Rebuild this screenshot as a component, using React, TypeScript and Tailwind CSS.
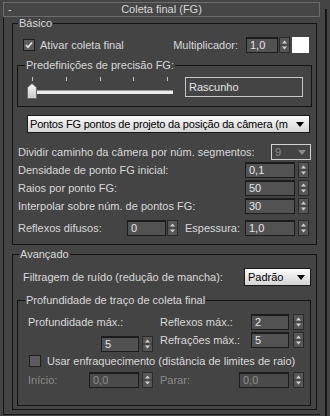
import React from "react";

// setas do spinner (cima / baixo)
const Arrows = ({ className = "" }: { className?: string }) => (
  <svg width="11" height="16" viewBox="0 0 11 16" className={`shrink-0 ${className}`}>
    <rect x="0.5" y="0.5" width="10" height="15" fill="#565656" stroke="#2a2a2a" />
    <line x1="1" y1="8" x2="10" y2="8" stroke="#3a3a3a" />
    <path d="M3 6.5 L5.5 3.5 L8 6.5 Z" fill="#cfcfcf" />
    <path d="M3 9.5 L5.5 12.5 L8 9.5 Z" fill="#cfcfcf" />
  </svg>
);

const Tri = ({ color = "#000", className = "" }: { color?: string; className?: string }) => (
  <svg width="8" height="5" viewBox="0 0 8 5" className={`shrink-0 ${className}`}>
    <path d="M0 0 H8 L4 5 Z" fill={color} />
  </svg>
);

const Field = ({
  value,
  w,
  dim = false,
  className = "",
}: {
  value: string;
  w: string;
  dim?: boolean;
  className?: string;
}) => (
  <div
    className={`h-4 shrink-0 border border-t-2 border-[#1c1c1c] pl-[3px] leading-[13px] ${w} ${
      dim ? "bg-[#4a4a4a] text-[#8e8e8e]" : "bg-[#525252] text-[#e6e6e6]"
    } ${className}`}
  >
    {value}
  </div>
);

const Check = ({ checked = false, className = "" }: { checked?: boolean; className?: string }) => (
  <div
    className={`flex h-3 w-3 shrink-0 items-center justify-center border border-[#1e1e1e] bg-[#5c5c5c] ${className}`}
  >
    {checked && (
      <svg width="8" height="8" viewBox="0 0 8 8">
        <path d="M1 4 L3 6.2 L7 1.5" stroke="#e8e8e8" strokeWidth="1.7" fill="none" />
      </svg>
    )}
  </div>
);

export default function App() {
  return (
    <div className="flex h-[416px] w-[330px] overflow-hidden bg-[#444444] font-['Liberation_Sans',Arial,sans-serif] text-[11px] leading-[13px] text-[#d9d9d9]">
      <div className="ml-[3px] mt-[2px] flex w-[317px] shrink-0 flex-col">
        {/* --- TÍTULO --- */}
        <div className="grid h-[15px] shrink-0 grid-cols-[20px_1fr_20px] items-center border border-[#6c6c6c] bg-[#464646]">
          <span className="pl-[4px]">-</span>
          <span className="text-center">Coleta final (FG)</span>
          <span />
        </div>

        {/* --- CORPO --- */}
        <div className="h-[398px] shrink-0 border-b border-l border-[#161616] pl-[8px]">
          {/* Básico */}
          <fieldset className="w-[305px] border border-[#141414] pb-[7px]">
            <legend className="ml-[5px] px-[1px] leading-[13px]">Básico</legend>

            <div className="mt-[7px] flex h-4 items-center pr-[7px]">
              <Check checked className="ml-[10px]" />
              <span className="ml-[5px]">Ativar coleta final</span>
              <span className="ml-auto">Multiplicador:</span>
              <Field value="1,0" w="w-[32px]" className="ml-[8px]" />
              <Arrows className="ml-px" />
              <div className="ml-[2px] h-4 w-[17px] bg-white" />
            </div>

            <fieldset className="ml-[4px] mt-[6px] h-[48px] w-[295px] border border-[#141414]">
              <legend className="ml-[7px] px-[1px] leading-[13px]">Predefinições de precisão FG:</legend>
              <div className="flex items-start">
                <div className="relative ml-[9px] mt-[5px] h-[22px] w-[146px]">
                  <div className="flex h-[4px] justify-between px-[5px]">
                    <div className="h-[4px] w-px bg-[#c4c4c4]" />
                    <div className="h-[4px] w-px bg-[#c4c4c4]" />
                    <div className="h-[4px] w-px bg-[#c4c4c4]" />
                    <div className="h-[4px] w-px bg-[#c4c4c4]" />
                    <div className="h-[4px] w-px bg-[#c4c4c4]" />
                  </div>
                  <div className="mt-[9px] h-[4px] w-full border-t border-[#9a9a9a] bg-[#ececec]" />
                  <svg width="10" height="16" viewBox="0 0 10 16" className="absolute left-0 top-[6px]">
                    <defs>
                      <linearGradient id="th" x1="0" y1="0" x2="0" y2="1">
                        <stop offset="0" stopColor="#fafafa" />
                        <stop offset="1" stopColor="#c8c8c8" />
                      </linearGradient>
                    </defs>
                    <path d="M0.5 4.5 L5 0.5 L9.5 4.5 V15.5 H0.5 Z" fill="url(#th)" stroke="#6a6a6a" />
                  </svg>
                </div>
                <div className="ml-[12px] mt-[5px] h-5 w-[118px] border border-[#c8c8c8] pl-[3px] leading-[18px] text-[#e4e4e4]">
                  Rascunho
                </div>
              </div>
            </fieldset>

            <div className="ml-[14px] mt-[8px] flex h-[18px] w-[283px] items-center border border-[#1a1a1a] bg-linear-to-b from-[#fbfbfb] to-[#d4d4d4] text-black">
              <span className="ml-[2px] whitespace-nowrap tracking-[-0.2px]">
                Pontos FG pontos de projeto da posição da câmera (m
              </span>
              <Tri className="ml-auto mr-[5px]" />
            </div>

            <div className="mt-[10px] flex h-[18px] items-center pl-[5px] pr-[5px]">
              <span>Dividir caminho da câmera por núm. segmentos:</span>
              <div className="ml-auto flex h-4 w-[40px] items-center border border-[#d2d2d2] pl-[3px] text-[#8c8c8c]">
                9
                <Tri color="#8c8c8c" className="ml-auto mr-[4px]" />
              </div>
            </div>

            <div className="flex h-[18px] items-center pl-[5px] pr-[7px]">
              <span>Densidade de ponto FG inicial:</span>
              <Field value="0,1" w="w-[50px]" className="ml-auto" />
              <Arrows className="ml-[3px]" />
            </div>

            <div className="flex h-[18px] items-center pl-[5px] pr-[7px]">
              <span>Raios por ponto FG:</span>
              <Field value="50" w="w-[50px]" className="ml-auto" />
              <Arrows className="ml-[3px]" />
            </div>

            <div className="flex h-[18px] items-center pl-[5px] pr-[7px]">
              <span>Interpolar sobre núm. de pontos FG:</span>
              <Field value="30" w="w-[50px]" className="ml-auto" />
              <Arrows className="ml-[3px]" />
            </div>

            <div className="mt-[4px] flex h-[18px] items-center pl-[5px] pr-[7px]">
              <span className="w-[109px] shrink-0">Reflexos difusos:</span>
              <Field value="0" w="w-[39px]" />
              <Arrows className="ml-px" />
              <span className="ml-[7px]">Espessura:</span>
              <Field value="1,0" w="w-[50px]" className="ml-auto" />
              <Arrows className="ml-[3px]" />
            </div>
          </fieldset>

          {/* Avançado */}
          <fieldset className="mt-[3px] w-[305px] border border-[#141414] pb-[3px]">
            <legend className="ml-[6px] px-[1px] leading-[13px]">Avançado</legend>

            <div className="mt-[7px] flex h-[18px] items-center pl-[10px] pr-[5px]">
              <span>Filtragem de ruído (redução de mancha):</span>
              <div className="ml-auto flex h-[18px] w-[67px] items-center border border-[#1a1a1a] bg-linear-to-b from-[#fbfbfb] to-[#d4d4d4] pl-[3px] text-black">
                Padrão
                <Tri className="ml-auto mr-[5px]" />
              </div>
            </div>

            <fieldset className="ml-[4px] mt-[8px] w-[294px] border border-[#141414] pb-[17px]">
              <legend className="ml-[7px] px-[1px] leading-[13px]">Profundidade de traço de coleta final</legend>

              <div className="flex">
                <div className="w-[142px] shrink-0">
                  <div className="mt-[7px] h-4 pl-[10px] leading-4">Profundidade máx.:</div>
                  <div className="mt-[6px] flex pl-[83px]">
                    <Field value="5" w="w-[38px]" />
                    <Arrows className="ml-[3px]" />
                  </div>
                </div>
                <div className="flex-1">
                  <div className="mt-[7px] flex h-4 items-center">
                    <span className="w-[91px] shrink-0">Reflexos máx.:</span>
                    <Field value="2" w="w-[38px]" />
                    <Arrows className="ml-[4px]" />
                  </div>
                  <div className="mt-[2px] flex h-4 items-center">
                    <span className="w-[91px] shrink-0">Refrações máx.:</span>
                    <Field value="5" w="w-[38px]" />
                    <Arrows className="ml-[4px]" />
                  </div>
                </div>
              </div>

              <div className="mt-px flex h-4 items-center pl-[11px]">
                <Check />
                <span className="ml-[6px] whitespace-nowrap">
                  Usar enfraquecimento (distância de limites de raio)
                </span>
              </div>

              <div className="mt-[3px] flex h-4 items-center text-[#8a8a8a]">
                <div className="flex w-[142px] shrink-0 items-center pl-[10px]">
                  <span className="w-[61px] shrink-0">Início:</span>
                  <Field value="0,0" w="w-[50px]" dim />
                  <Arrows className="ml-[3px]" />
                </div>
                <span className="w-[79px] shrink-0">Parar:</span>
                <Field value="0,0" w="w-[50px]" dim />
                <Arrows className="ml-[4px]" />
              </div>
            </fieldset>
          </fieldset>
        </div>
      </div>

      {/* barra de rolagem */}
      <div className="ml-[5px] mt-[9px] h-[407px] w-[2px] shrink-0 bg-[#151515]" />
    </div>
  );
}
